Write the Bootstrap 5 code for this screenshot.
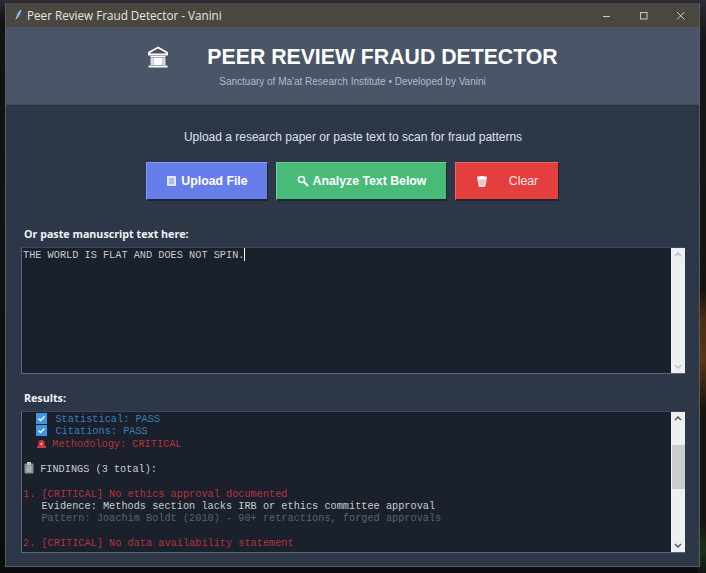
<!DOCTYPE html>
<html lang="en">
<head>
    <meta charset="UTF-8">
    <meta name="viewport" content="width=device-width, initial-scale=1.0">
    <title>Peer Review Fraud Detector - Vanini</title>
    <link rel="stylesheet" href="https://cdn.jsdelivr.net/npm/bootstrap@5.3.0/dist/css/bootstrap.min.css">
    <style>
        html, body { height: 100%; }
        body {
            overflow: hidden;
            padding: 3px 6px 6px 5px;
            font-family: "Liberation Sans", Arial, sans-serif;
            background-color: #0e0f12;
            background-image:
                linear-gradient(180deg, #2c2a33 0, #17161b 40px, #17140f 290px, #4a2c14 320px, #5a3416 360px, #17140f 410px, #17140f 520px, #1d3018 550px, #101510 573px),
                linear-gradient(180deg, #2c2a33 0, #131316 20px, #0c0c0e 100%);
            background-repeat: no-repeat;
            background-size: 8px 100%, 100% 100%;
            background-position: right top, left top;
        }
        .app-window {
            height: 564px;
            display: flex;
            flex-direction: column;
            background: #2d3748;
            border: 1px solid #5c5c5c;
            border-top: 0;
        }
        .title-strip {
            height: 24px;
            flex: none;
            background: #4a4640;
            color: #e6e6e4;
            font-family: "Open Sans", "Segoe UI", sans-serif;
            font-size: 11.7px;
            padding-left: 8px;
            padding-top: 1px;
        }
        .win-ctrl { width: 37px; display: flex; justify-content: center; }
        .app-head {
            height: 78px;
            flex: none;
            background: #4a5568;
            border-bottom: 1px solid #414b5c;
        }
        .head-row { padding-top: 16px; gap: 38px; }
        .head-title {
            font-size: 21.25px;
            font-weight: 700;
            line-height: 28px;
            color: #fff;
            margin: 0;
        }
        .head-sub { font-size: 10px; line-height: 13px; color: #b4bbc6; margin-top: 4px; }
        .app-main { padding: 0 14px 0 15px; flex: 1; min-height: 0; }
        .upload-hint { font-size: 12px; color: #dfe3e8; text-align: center; margin: 25px 0 0; line-height: 15px; }
        .btn-row { margin-top: 17px; gap: 8px; padding-left: 125px; }
        .act-btn {
            height: 39px;
            border: 1px solid rgba(255,255,255,.22);
            border-right-color: #20262f;
            border-bottom: 2px solid #20262f;
            border-radius: 0;
            color: #fff;
            font-size: 12.3px;
            font-weight: 700;
            padding: 0;
            display: flex;
            align-items: center;
            justify-content: center;
        }
        .btn-upload { width: 122px; background: #667eea; }
        .btn-scan { width: 171px; background: #48bb78; }
        .btn-wipe { width: 104px; background: #e53e3e; font-weight: 400; color: #fde8e8; }
        .wipe-gap { margin-left: 21px; }
        .field-label { font-family: "Open Sans", sans-serif; font-size: 10.7px; font-weight: 700; color: #f0f2f4; line-height: 14px; padding-left: 3px; }
        .field-label-a { margin-top: 26px; }
        .field-label-b { margin-top: 17px; }
        .text-pane {
            display: flex;
            margin-top: 6px;
            border: 1px solid #5f6776;
            border-top-color: #3d4656;
            border-right: 0;
            background: #1a202c;
        }
        .pane-a { height: 127px; }
        .pane-b { height: 142px; }
        .pane-body {
            flex: 1;
            overflow: hidden;
            font-family: "Liberation Mono", "Courier New", monospace;
            font-size: 10.25px;
            line-height: 12.3px;
            white-space: pre;
            padding-top: 1px;
            padding-left: 1px;
            color: #c9ccd1;
        }
        .pane-a .pane-body { padding-top: 0; }
        .fake-caret { display: inline-block; width: 1px; height: 13px; background: #fff; vertical-align: -3px; }
        .scroll-rail {
            width: 14px;
            flex: none;
            background: #efefef;
            display: flex;
            flex-direction: column;
            justify-content: space-between;
            align-items: center;
            position: relative;
            padding: 4px 0;
        }
        .scroll-thumb { position: absolute; left: 1px; right: 0; top: 33px; height: 44px; background: #cdcdcd; }
        .tone-pass { color: #3d7fb5; }
        .tone-crit { color: #b5343a; }
        .tone-plain { color: #c9ccd1; }
        .tone-dim { color: #5b6270; }
        .line-icon { display: inline-block; vertical-align: -2px; margin-left: 1px; }
        .check-gap { margin-right: 2px; }
        .siren-gap { margin-right: 5px; }
    </style>
</head>
<body>

<div class="app-window">
    <div class="title-strip d-flex align-items-center">
        <svg width="9" height="13" viewBox="0 0 9 13" class="me-1"><path d="M7 1C4 2 2.500 5 2 9L1 12l1.500-2.500C5 9 7 5 7 1z" fill="#5b8fd0"/><path d="M7 1L2 10" stroke="#e8eef6" stroke-width=".7"/></svg>
        <span>Peer Review Fraud Detector - Vanini</span>
        <div class="ms-auto d-flex align-items-center">
            <div class="win-ctrl"><svg width="10" height="10"><path d="M1 5.500h7" stroke="#c8c8c6"/></svg></div>
            <div class="win-ctrl"><svg width="10" height="10"><rect x="1.500" y="1.500" width="6.500" height="6.500" fill="none" stroke="#c8c8c6"/></svg></div>
            <div class="win-ctrl"><svg width="10" height="10"><path d="M1 1l7.500 7.500M8.500 1L1 8.500" stroke="#c8c8c6"/></svg></div>
        </div>
    </div>

    <div class="app-head text-center">
        <div class="head-row d-flex justify-content-center align-items-center">
            <svg width="22" height="22" viewBox="0 0 22 22"><path d="M11 1.500L2 6.500v2h18v-2z" fill="none" stroke="#fff" stroke-width="1.800"/><path d="M3.500 10h15v1.500h-15z" fill="#fff"/><path d="M3.500 12h3v7h-3zM15.500 12h3v7h-3z" fill="#d9dde3"/><rect x="6.500" y="12" width="9" height="7" fill="#fff"/><path d="M1.500 20.500h19" stroke="#fff" stroke-width="2"/></svg>
            <h1 class="head-title">PEER REVIEW FRAUD DETECTOR</h1>
        </div>
        <div class="head-sub">Sanctuary of Ma'at Research Institute • Developed by Vanini</div>
    </div>

    <div class="app-main">
        <p class="upload-hint">Upload a research paper or paste text to scan for fraud patterns</p>
        <div class="btn-row d-flex">
            <button type="button" class="btn act-btn btn-upload">
                <svg width="11" height="12" viewBox="0 0 11 12" class="me-1"><path d="M1.500 1.500h8v9h-8z" fill="#dfe4fb" stroke="#e6e9fb"/><path d="M3 4h5M3 6h5M3 8h5" stroke="#7d8fe6"/></svg>Upload File
            </button>
            <button type="button" class="btn act-btn btn-scan">
                <svg width="12" height="12" viewBox="0 0 12 12" class="me-1"><circle cx="4.500" cy="4.500" r="3" fill="none" stroke="#fff" stroke-width="1.500"/><path d="M7 7l4 4" stroke="#fff" stroke-width="2"/></svg>Analyze Text Below
            </button>
            <button type="button" class="btn act-btn btn-wipe">
                <svg width="12" height="13" viewBox="0 0 12 13"><path d="M1 2.500h10L9.500 11a1.500 1.500 0 0 1-1.500 1H4a1.500 1.500 0 0 1-1.500-1z" fill="#fbdada"/><ellipse cx="6" cy="2.500" rx="5" ry="1.500" fill="#fff"/><path d="M4 5l.4 5M6 5v5M8 5l-.4 5" stroke="#eb9a9a" stroke-width=".7"/></svg>
                <span class="wipe-gap">Clear</span>
            </button>
        </div>

        <div class="field-label field-label-a">Or paste manuscript text here:</div>
        <div class="text-pane pane-a">
            <div class="pane-body">THE WORLD IS FLAT AND DOES NOT SPIN.<span class="fake-caret"></span></div>
            <div class="scroll-rail">
                <svg width="8" height="5"><path d="M1 4l3-3 3 3" fill="none" stroke="#c4c4c4" stroke-width="1.500"/></svg>
                <svg width="8" height="5"><path d="M1 1l3 3 3-3" fill="none" stroke="#c4c4c4" stroke-width="1.500"/></svg>
            </div>
        </div>

        <div class="field-label field-label-b">Results:</div>
        <div class="text-pane pane-b">
            <div class="pane-body"><div>  <svg class="line-icon check-gap" width="11" height="11"><rect width="11" height="11" fill="#3f97e0"/><path d="M2.500 5.500l2 2 4-4" fill="none" stroke="#fff" stroke-width="1.300"/></svg> <span class="tone-pass">Statistical: PASS</span></div><div>  <svg class="line-icon check-gap" width="11" height="11"><rect width="11" height="11" fill="#3f97e0"/><path d="M2.500 5.500l2 2 4-4" fill="none" stroke="#fff" stroke-width="1.300"/></svg> <span class="tone-pass">Citations: PASS</span></div><div>  <svg class="line-icon siren-gap" width="11" height="11" viewBox="0 0 11 11"><path d="M2.500 8V5a3 3 0 0 1 6 0v3z" fill="#d03a3f"/><rect x="1" y="8" width="9" height="2" fill="#d03a3f"/><circle cx="5.500" cy="6" r="1" fill="#f3d0d0"/></svg><span class="tone-crit">Methodology: CRITICAL</span></div><div> </div><div><svg class="line-icon" width="10" height="12" viewBox="0 0 10 12"><rect x=".500" y="1.500" width="9" height="10" rx="1" fill="#8b8f94"/><rect x="3" y="0" width="4" height="3" fill="#c4c7ca"/><path d="M2.500 5h5M2.500 7h5M2.500 9h5" stroke="#d8dadc" stroke-width=".8"/></svg> <span class="tone-plain">FINDINGS (3 total):</span></div><div> </div><div class="tone-crit">1. [CRITICAL] No ethics approval documented</div><div class="tone-plain">   Evidence: Methods section lacks IRB or ethics committee approval</div><div class="tone-dim">   Pattern: Joachim Boldt (2010) - 90+ retractions, forged approvals</div><div> </div><div class="tone-crit">2. [CRITICAL] No data availability statement</div></div>
            <div class="scroll-rail">
                <svg width="8" height="5"><path d="M1 4l3-3 3 3" fill="none" stroke="#555" stroke-width="1.500"/></svg>
                <div class="scroll-thumb"></div>
                <svg width="8" height="5"><path d="M1 1l3 3 3-3" fill="none" stroke="#555" stroke-width="1.500"/></svg>
            </div>
        </div>
    </div>
</div>

<script src="https://cdn.jsdelivr.net/npm/bootstrap@5.3.0/dist/js/bootstrap.bundle.min.js"></script>
</body>
</html>
